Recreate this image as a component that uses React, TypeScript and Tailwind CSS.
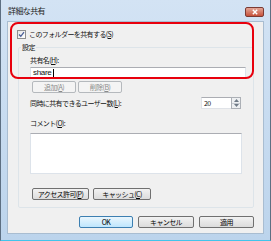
import type { ReactNode } from "react";

function Btn({
  children,
  className = "",
  disabled = false,
  primary = false,
}: {
  children: ReactNode;
  className?: string;
  disabled?: boolean;
  primary?: boolean;
}) {
  const look = disabled
    ? "border-[#b5b9bd] bg-[#f4f4f4] text-[#8a8a8a]"
    : primary
      ? "border-[#3c7fb1] bg-linear-to-b from-[#eaf6fd] to-[#bee6fd] text-black"
      : "border-[#707070] bg-linear-to-b from-[#f2f2f2] to-[#dcdcdc] text-black";
  return (
    <div
      className={`flex h-[12px] items-center justify-center rounded-[2px] border ${look} ${className}`}
    >
      <span className="whitespace-nowrap">{children}</span>
    </div>
  );
}

// access key letter, underlined like a Windows label
function K({ children }: { children: ReactNode }) {
  return <span className="underline underline-offset-[1px]">{children}</span>;
}

function Checkbox() {
  return (
    <div className="flex h-[9px] w-[9px] items-center justify-center border border-[#8e8f8f] bg-linear-to-br from-[#e6e6e6] to-white">
      <svg width="7" height="7" viewBox="0 0 7 7">
        <path d="M1 3.5 L2.8 5.3 L6 1.2" fill="none" stroke="#4a5f97" strokeWidth="1.3" />
      </svg>
    </div>
  );
}

function Spin({ value }: { value: string }) {
  return (
    <div className="flex h-[12px]">
      <div className="flex w-[30px] items-center border border-r-0 border-[#e0e3e8] border-t-[#abadb3] bg-white pl-[2px]">
        {value}
      </div>
      <div className="flex w-[10px] flex-col border border-[#acb0b6] bg-[#eef0f2]">
        <div className="flex flex-1 items-center justify-center border-b border-[#c8ccd2]">
          <svg width="5" height="3" viewBox="0 0 5 3">
            <path d="M0 3 L2.5 0 L5 3 Z" fill="#6f7a86" />
          </svg>
        </div>
        <div className="flex flex-1 items-center justify-center">
          <svg width="5" height="3" viewBox="0 0 5 3">
            <path d="M0 0 L2.5 3 L5 0 Z" fill="#6f7a86" />
          </svg>
        </div>
      </div>
    </div>
  );
}

export default function App() {
  return (
    <div className="relative flex h-[241px] w-[271px] flex-col border-x border-b border-x-[#5d6f82] border-b-[#42c4ea] bg-linear-to-b from-[#d3e3f4] to-[#bcd4ec] font-['Noto_Sans_CJK_JP',sans-serif] text-[7px] leading-[10px] tracking-[-0.6px] text-[#111]">
      {/* title bar */}
      <div className="flex h-[21px] items-center justify-between pl-[7px] pr-[6px]">
        <span className="text-[8px] tracking-[-0.6px] text-[#1e1e1e]">詳細な共有</span>
        <div className="mt-[2px] flex h-[10px] w-[19px] items-center justify-center rounded-[2px] border border-[#7b3a33] bg-linear-to-b from-[#e2a596] to-[#c6503a]">
          <svg width="6" height="6" viewBox="0 0 6 6">
            <path d="M0.8 0.8 L5.2 5.2 M5.2 0.8 L0.8 5.2" stroke="white" strokeWidth="1.4" />
          </svg>
        </div>
      </div>

      {/* client area */}
      <div className="mx-[6px] mb-[6px] flex flex-1 flex-col border border-[#a9bdd1] bg-[#f0f0f0]">
        <div className="ml-[9px] mt-[7px] flex items-center gap-[3px]">
          <Checkbox />
          <span>このフォルダーを共有する(<K>S</K>)</span>
        </div>

        <fieldset className="ml-[10px] mt-[3px] w-[236px] rounded-[2px] border border-[#dde4e9] pb-[7px] pl-[11px]">
          <legend className="-ml-[9px] px-[1px] leading-[10px]">設定</legend>
          <div className="mt-[3px]">共有名(<K>H</K>):</div>
          <div className="mt-[2px] flex h-[12px] w-[216px] items-center border border-[#dde3ea] border-t-[#abadb3] bg-white pl-[2px] font-['Liberation_Sans',sans-serif] text-[8px] tracking-[-0.3px]">
            share<span className="ml-[1px] h-[8px] w-px bg-black" />
          </div>
          <div className="ml-[2px] mt-[2px] flex gap-[2px]">
            <Btn disabled className="w-[44px]">追加(<K>A</K>)</Btn>
            <Btn disabled className="w-[44px]">削除(<K>B</K>)</Btn>
          </div>
          <div className="mt-[4px] flex w-[211px] items-center justify-between">
            <span>同時に共有できるユーザー数(<K>L</K>):</span>
            <Spin value="20" />
          </div>
          <div className="mt-[9px]">コメント(<K>O</K>):</div>
          <div className="mt-[5px] h-[41px] w-[212px] border border-[#dde3ea] border-t-[#abadb3] bg-white" />
          <div className="ml-[2px] mt-[14px] flex gap-[4px]">
            <Btn className="w-[57px]">アクセス許可(<K>P</K>)</Btn>
            <Btn className="w-[58px]">キャッシュ(<K>C</K>)</Btn>
          </div>
        </fieldset>

        <div className="mr-[9px] mt-[8px] flex justify-end gap-[5px]">
          <Btn primary className="w-[54px]">OK</Btn>
          <Btn className="w-[56px]">キャンセル</Btn>
          <Btn className="w-[55px]">適用</Btn>
        </div>
      </div>

      {/* red highlight annotation */}
      <div className="pointer-events-none absolute left-[9px] top-[22px] h-[57px] w-[244px] rounded-[8px] border-2 border-[#e8000d]" />
    </div>
  );
}
